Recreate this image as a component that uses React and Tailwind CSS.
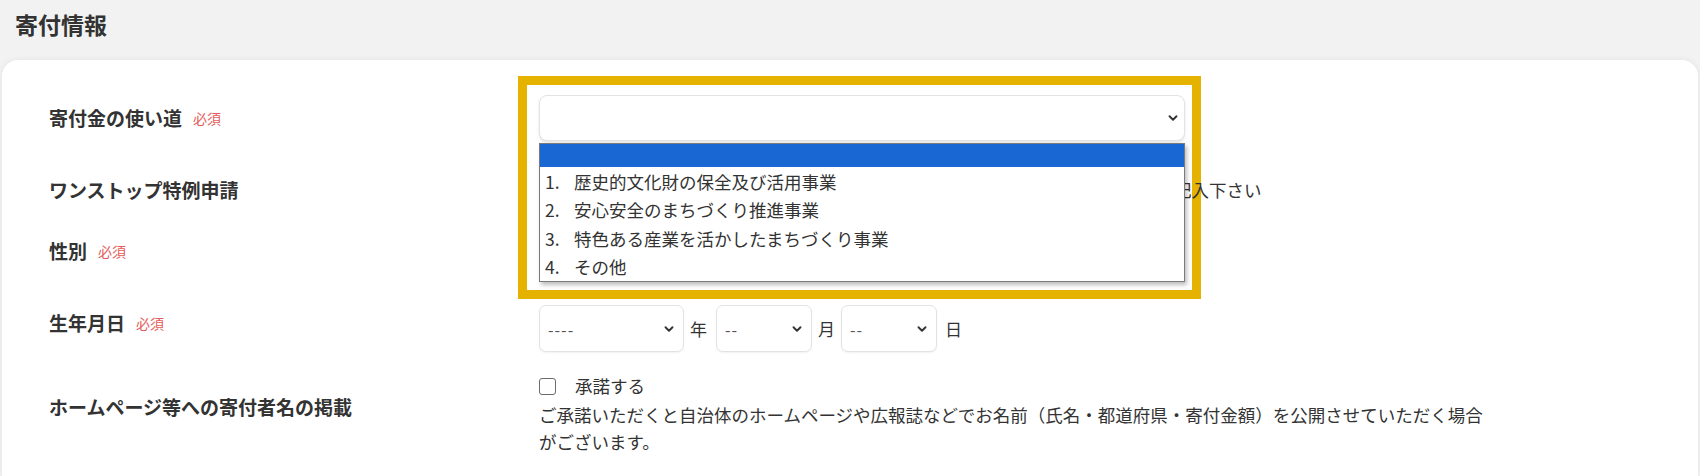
import { ChevronDown } from "lucide-react";

const options = [
  "歴史的文化財の保全及び活用事業",
  "安心安全のまちづくり推進事業",
  "特色ある産業を活かしたまちづくり事業",
  "その他",
];

function Required() {
  return <span className="ml-[11px] text-[14px] font-normal text-[#e35d5d]">必須</span>;
}

function Label({ children, required }) {
  return (
    <div className="flex w-[490px] shrink-0 items-center text-[19px] font-bold leading-[28px] text-[#333]">
      {children}
      {required && <Required />}
    </div>
  );
}

function SmallSelect({ value, width }) {
  return (
    <div
      className={`flex h-[47px] items-center justify-between rounded-[7px] border border-[#e3e3e3] bg-white pl-[8px] pr-[7px] text-[#555] shadow-[0_1px_2px_rgba(0,0,0,0.06)] ${width}`}
    >
      <span className="text-[16px] tracking-[1px]">{value}</span>
      <ChevronDown size={14} strokeWidth={3.2} className="text-[#333]" />
    </div>
  );
}

export default function App() {
  return (
    <div className="h-[476px] overflow-hidden bg-[#f2f2f2] font-['Noto_Sans_CJK_JP','Noto_Sans',sans-serif] text-[#333]">
      <div className="flex h-[60px] items-start pl-[15px] pt-[9px]">
        <h2 className="text-[23px] font-bold leading-[30px] text-[#333]">寄付情報</h2>
      </div>

      <div className="mx-[2px] h-[416px] rounded-t-[16px] bg-white pl-[47px] pt-[35px] shadow-[0_0_6px_rgba(0,0,0,0.07)]">
        {/* 寄付金の使い道 */}
        <div className="flex items-center">
          <Label required>寄付金の使い道</Label>
          <div className="relative w-[646px]">
            <div className="flex h-[46px] items-center justify-end rounded-[8px] border border-[#e3e3e3] bg-white pr-[4px] shadow-[0_2px_3px_rgba(0,0,0,0.1)]">
              <ChevronDown size={14} strokeWidth={3.2} className="text-[#333]" />
            </div>

            {/* open option list */}
            <div className="absolute left-0 top-[48px] z-20 w-[646px] border border-[#7a7a7a] bg-white shadow-[2px_3px_4px_rgba(0,0,0,0.25)]">
              <div className="h-[23px] bg-[#1967d2]" />
              {options.map((o, i) => (
                <div key={o} className="flex h-[28.5px] items-center pl-[5px] text-[17.5px] leading-none text-[#333]">
                  <span className="w-[29px]">{i + 1}.</span>
                  <span>{o}</span>
                </div>
              ))}
            </div>

            {/* highlight frame */}
            <div className="pointer-events-none absolute left-[-21px] top-[-19px] z-10 h-[223px] w-[683px] border-[9px] border-[#e6b200]" />
          </div>
        </div>

        {/* ワンストップ特例申請 */}
        <div className="mt-[29px] flex h-[40px] items-center">
          <Label>ワンストップ特例申請</Label>
          <p className="relative z-[15] ml-[635px] whitespace-nowrap text-[17.5px]">記入下さい</p>
        </div>

        {/* 性別 */}
        <div className="mt-[21px] flex h-[40px] items-center">
          <Label required>性別</Label>
          <div />
        </div>

        {/* 生年月日 */}
        <div className="mt-[34px] flex items-start">
          <div className="pt-[4px]">
            <Label required>生年月日</Label>
          </div>
          <div className="flex items-center text-[17px]">
            <SmallSelect value="----" width="w-[145px]" />
            <span className="ml-[6px] mr-[9px]">年</span>
            <SmallSelect value="--" width="w-[96px]" />
            <span className="ml-[6px] mr-[6px]">月</span>
            <SmallSelect value="--" width="w-[96px]" />
            <span className="ml-[8px]">日</span>
          </div>
        </div>

        {/* ホームページ等への寄付者名の掲載 */}
        <div className="mt-[25px] flex items-start">
          <div className="pt-[16px]">
            <Label>ホームページ等への寄付者名の掲載</Label>
          </div>
          <div>
            <label className="flex h-[19px] items-center">
              <span className="h-[17px] w-[17px] rounded-[3px] border border-[#6b6b6b] bg-white" />
              <span className="ml-[19px] text-[17.5px]">承諾する</span>
            </label>
            <p className="mt-[5px] text-[17.5px] leading-[27px]">
              ご承諾いただくと自治体のホームページや広報誌などでお名前（氏名・都道府県・寄付金額）を公開させていただく場合
              <br />
              がございます。
            </p>
          </div>
        </div>
      </div>
    </div>
  );
}
